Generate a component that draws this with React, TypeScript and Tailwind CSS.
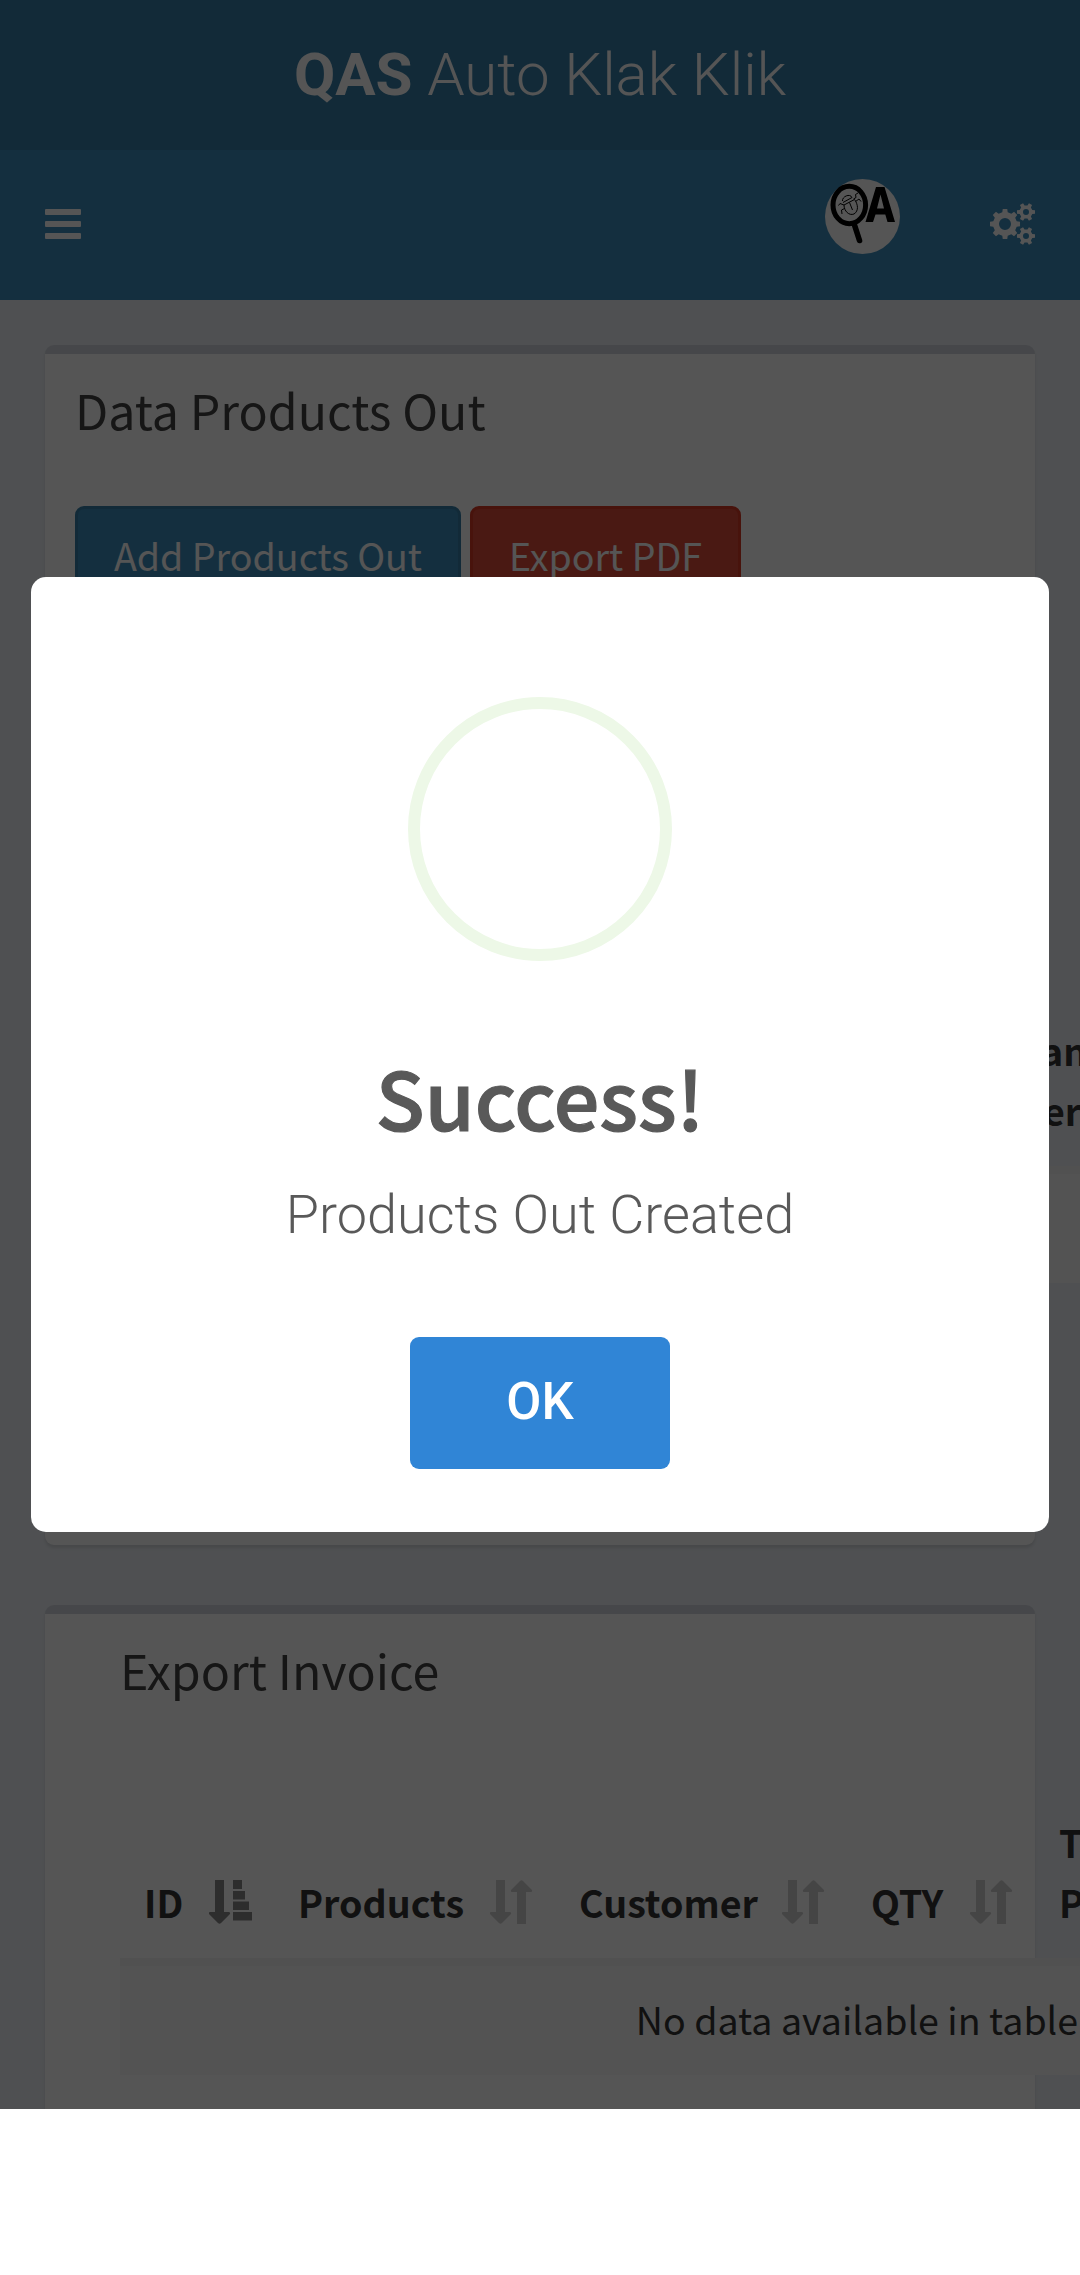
import React from "react";

const SANS = "font-['Noto_Sans_CJK_SC',sans-serif]";

function gearPath(cx: number, cy: number, outer: number, root: number, hole: number, teeth: number) {
  const step = (Math.PI * 2) / teeth;
  const points: string[] = [];
  for (let i = 0; i < teeth; i++) {
    const a = i * step;
    const corners: [number, number][] = [
      [root, -0.29],
      [outer, -0.19],
      [outer, 0.19],
      [root, 0.29],
    ];
    for (const [r, k] of corners) {
      points.push(`${(cx + r * Math.cos(a + k * step)).toFixed(2)} ${(cy + r * Math.sin(a + k * step)).toFixed(2)}`);
    }
  }
  return `M${points.join("L")}ZM${cx + hole} ${cy}a${hole} ${hole} 0 1 0 ${-2 * hole} 0a${hole} ${hole} 0 1 0 ${2 * hole} 0Z`;
}

function CogsIcon() {
  return (
    <svg className="h-[42px] w-[45px]" viewBox="0 0 45 42" fill="#fff" fillRule="evenodd">
      <path d={gearPath(15, 21, 15.2, 12, 6, 8)} />
      <path d={gearPath(36, 9, 9.2, 6.6, 3, 6)} />
      <path d={gearPath(36, 33, 9.2, 6.6, 3, 6)} />
    </svg>
  );
}

function Avatar() {
  return (
    <svg className="size-[75px]" viewBox="0 0 75 75">
      <circle cx="37.5" cy="37.5" r="37.5" fill="#fff" />
      <g fill="none" stroke="#000">
        <ellipse cx="24.3" cy="26" rx="16.3" ry="18.7" strokeWidth="5" />
        <path d="M29.5 46L34.5 61.5" strokeWidth="5.6" strokeLinecap="round" />
        <g strokeWidth="1">
          <path d="M17.500 22C17 17.500 25 14 27 18.500" />
          <path d="M19 26L29.500 20.500C33 25 34 32 29 35C24 37 19 32 19 26ZM18 23.500L27 18.500M24.500 23.500L27.500 31" />
          <path d="M19 26L15 24.500L13.500 26.500M19.500 29.500L16.500 31L17 35M28.500 20L31 18.500L30.500 15.500L33 14M30.500 22.500L34 20L36 22.500" />
        </g>
      </g>
      <path fill="#000" fillRule="evenodd" d="M51 8h8.500l10.500 35h-7.500l-2.200-7.500H50.500L48 43h-7.500ZM55.500 15.500L52 29.500h7Z" />
    </svg>
  );
}

function SortIcon({ active = false }: { active?: boolean }) {
  return (
    <svg
      className={active ? "h-[44px] w-[43px] shrink-0 opacity-50" : "h-[44px] w-[43px] shrink-0 opacity-20"}
      viewBox="0 0 43 44"
      fill="#111"
    >
      <path d="M6 0h9v32h5q2 .5 .5 2.500l-8.500 8.500q-1.500 1.500-3 0L.5 34.500Q-1 32.500 1 32h5Z" />
      {active ? (
        <path d="M24 0h9v9h-9ZM24 11h12v8.500H24ZM24 21.500h16V30H24ZM24 32h19v8.500H24Z" />
      ) : (
        <path d="M27 44h9V12h5q2-.5 .5-2.500L33 1q-1.500-1.500-3 0l-8.500 8.500Q20 11.500 22 12h5Z" />
      )}
    </svg>
  );
}

function HeadCell({ label, width, active }: { label: string; width: string; active?: boolean }) {
  return (
    <div className={`flex shrink-0 items-end justify-between ${width}`}>
      <span>{label}</span>
      <div className="pb-[8px]">
        <SortIcon active={active} />
      </div>
    </div>
  );
}

export default function App() {
  return (
    <div className={`h-[2275px] w-[1080px] overflow-hidden bg-white text-[37.6px] text-[#333] ${SANS}`}>
      <div className="relative h-[2109px] overflow-hidden bg-[#ecf0f5]">
        <header>
          <div className="h-[150px] bg-[#367fa9] text-center font-[Roboto] text-[60px] leading-[149px] font-light text-white">
            <b className="font-bold">QAS</b> Auto Klak Klik
          </div>
          <nav className="flex h-[150px] items-start bg-[#3c8dbc] pr-[45px] pl-[45px]">
            <div className="mt-[59px] flex w-[36px] flex-col gap-[6px]">
              <i className="h-[6px] rounded-[1px] bg-white" />
              <i className="h-[6px] rounded-[1px] bg-white" />
              <i className="h-[6px] rounded-[1px] bg-white" />
            </div>
            <div className="mt-[29px] ml-auto">
              <Avatar />
            </div>
            <div className="mt-[53px] ml-[90px]">
              <CogsIcon />
            </div>
          </nav>
        </header>

        <main className="flex flex-col gap-[60px] px-[45px] pt-[45px]">
          <section className="h-[1200px] rounded-[9px] border-t-[9px] border-[#d2d6de] bg-white px-[30px] pt-[30px] shadow-[0_3px_3px_rgba(0,0,0,0.1)]">
            <h3 className="text-[48.3px] leading-[50px] text-[#444]">Data Products Out</h3>
            <div className="mt-[72px] flex gap-[9px] text-white">
              <button className="h-[102px] w-[386px] rounded-[9px] border-[3px] border-[#367fa9] bg-[#3c8dbc] pb-[4px] leading-[90px]">
                Add Products Out
              </button>
              <button className="h-[102px] w-[271px] rounded-[9px] border-[3px] border-[#d73925] bg-[#dd4b39] pb-[4px] leading-[90px]">
                Export PDF
              </button>
            </div>
            <div className="mt-[412px] w-[1100px]">
              <div className="h-[146px] leading-[60px] font-bold text-[#333]">
                <div className="pl-[966px]">an</div>
                <div className="pl-[968px]">er</div>
              </div>
              <div className="h-[117px] border-t-[8px] border-[#f4f4f4] bg-[#f9f9f9]" />
            </div>
          </section>

          <section className="h-[700px] rounded-[9px] border-t-[9px] border-[#d2d6de] bg-white px-[75px] pt-[30px] shadow-[0_3px_3px_rgba(0,0,0,0.1)]">
            <h3 className="text-[48.3px] leading-[50px] text-[#444]">Export Invoice</h3>
            <div className="mt-[117px] w-[1474px]">
              <div className="flex h-[147px] items-end pb-[26px] pl-[24px] leading-[60px] font-bold">
                <HeadCell label="ID" width="w-[108px]" active />
                <div className="w-[46px] shrink-0" />
                <HeadCell label="Products" width="w-[235px]" />
                <div className="w-[46px] shrink-0" />
                <HeadCell label="Customer" width="w-[246px]" />
                <div className="w-[46px] shrink-0" />
                <HeadCell label="QTY" width="w-[142px]" />
                <div className="w-[46px] shrink-0" />
                <div>
                  <div>T</div>
                  <div>P</div>
                </div>
              </div>
              <div className="h-[117px] border-t-[8px] border-[#f4f4f4] bg-[#f9f9f9] text-center leading-[106px]">
                No data available in table
              </div>
            </div>
          </section>
        </main>

        <div className="absolute inset-0 bg-black/[0.667]" />

        <div
          role="dialog"
          className="absolute top-[577px] left-[31px] flex h-[955px] w-[1018px] flex-col items-center rounded-[15px] bg-white pt-[120px] text-[#595959]"
        >
          <div className="size-[264px] shrink-0 rounded-full border-[12px] border-[#edf8e7]" />
          <h2 className="mt-[85px] text-[80.5px] leading-[100px] font-medium [-webkit-text-stroke:1.2px_#595959]">
            Success!
          </h2>
          <p className="mt-[34px] font-[Roboto] text-[54px] leading-[70px] font-light">Products Out Created</p>
          <button className="mt-[87px] h-[132px] w-[260px] rounded-[9px] bg-[#3085d6] pb-[2px] font-[Roboto] text-[51px] leading-[128px] font-medium text-white">
            OK
          </button>
        </div>
      </div>
    </div>
  );
}
